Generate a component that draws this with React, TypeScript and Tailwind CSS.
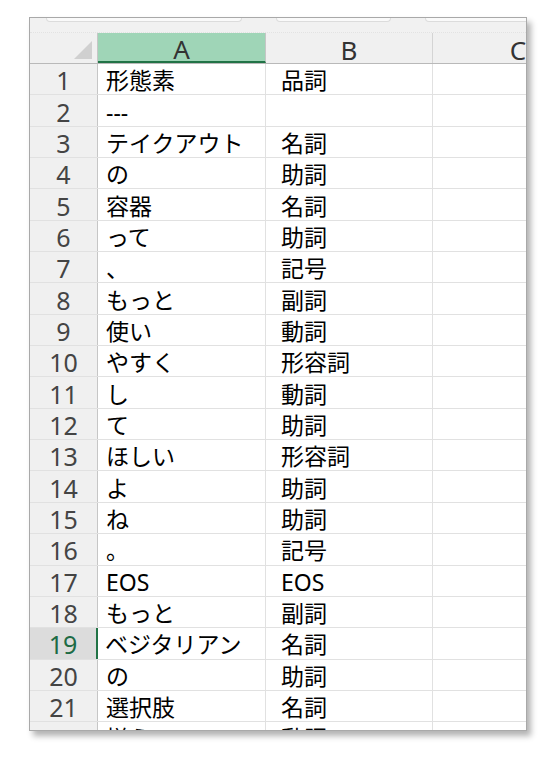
const rows: [string, string][] = [
  ["形態素", "品詞"],
  ["---", ""],
  ["テイクアウト", "名詞"],
  ["の", "助詞"],
  ["容器", "名詞"],
  ["って", "助詞"],
  ["、", "記号"],
  ["もっと", "副詞"],
  ["使い", "動詞"],
  ["やすく", "形容詞"],
  ["し", "動詞"],
  ["て", "助詞"],
  ["ほしい", "形容詞"],
  ["よ", "助詞"],
  ["ね", "助詞"],
  ["。", "記号"],
  ["EOS", "EOS"],
  ["もっと", "副詞"],
  ["ベジタリアン", "名詞"],
  ["の", "助詞"],
  ["選択肢", "名詞"],
  ["揃え", "動詞"],
];

const font = { fontFamily: '"Noto Sans", "Noto Sans CJK JP", sans-serif' };

export default function App() {
  return (
    <div className="min-h-[759px] w-[559px] bg-white pl-[29px] pt-[17px]" style={font}>
      <div className="flex h-[714px] w-[498px] flex-col overflow-hidden border border-[#a9a9a9] bg-white shadow-[4px_5px_6px_rgba(0,0,0,0.3)]">
        {/* top strip */}
        <div className="flex h-[15px] shrink-0 gap-[34px] border-b border-dotted border-[#e2e2e2] bg-[#f1f1f1] pl-[16px]">
          <div className="h-[4px] w-[196px] shrink-0 rounded-b-md border-x border-b border-[#dcdcdc] bg-[#fafafa]" />
          <div className="h-[4px] w-[115px] shrink-0 rounded-b-md border-x border-b border-[#dcdcdc] bg-[#fafafa]" />
          <div className="h-[4px] w-[120px] shrink-0 rounded-b-md border-x border-b border-[#dcdcdc] bg-[#fafafa]" />
        </div>
        {/* column header */}
        <div className="flex h-[31px] shrink-0 border-b border-[#b9b9b9] bg-[#f0f0f0] text-[26px] leading-none text-[#333]">
          <div className="flex w-[68px] shrink-0 items-end justify-end border-r border-[#c6c6c6] pb-[4px] pr-[5px]">
            <div className="h-0 w-0 border-b-[18px] border-l-[18px] border-b-[#d0d0d0] border-l-transparent" />
          </div>
          <div className="flex w-[168px] shrink-0 items-center justify-center border-r border-[#c6c6c6] border-b-2 border-b-[#217346] bg-[#9fd5b7] pt-[3px]">
            A
          </div>
          <div className="flex w-[167px] shrink-0 items-center justify-center border-r border-[#d4d4d4] pt-[3px]">
            B
          </div>
          <div className="flex w-[170px] shrink-0 items-center justify-center pt-[3px]">C</div>
        </div>
        {/* rows */}
        {rows.map(([a, b], i) => {
          const selected = i === 18;
          return (
            <div key={i} className="flex h-[31.35px] shrink-0 border-b border-[#e1e1e1] text-[23px] leading-none">
              <div
                className={`flex w-[68px] shrink-0 items-center justify-center pt-[3px] text-[25px] ${
                  selected
                    ? "border-r-2 border-[#217346] bg-[#dcdcdc] text-[#1d6b45]"
                    : "border-r border-[#c6c6c6] bg-[#f0f0f0] text-[#444]"
                }`}
              >
                {i + 1}
              </div>
              <div className={`flex w-[168px] shrink-0 items-center border-r border-[#e1e1e1] pt-[3px] text-black ${selected ? "pl-[7px]" : "pl-[8px]"}`}>
                {a}
              </div>
              <div className="flex w-[167px] shrink-0 items-center border-r border-[#e1e1e1] pl-[15px] pt-[3px] text-black">
                {b}
              </div>
              <div className="w-[170px] shrink-0" />
            </div>
          );
        })}
      </div>
    </div>
  );
}
